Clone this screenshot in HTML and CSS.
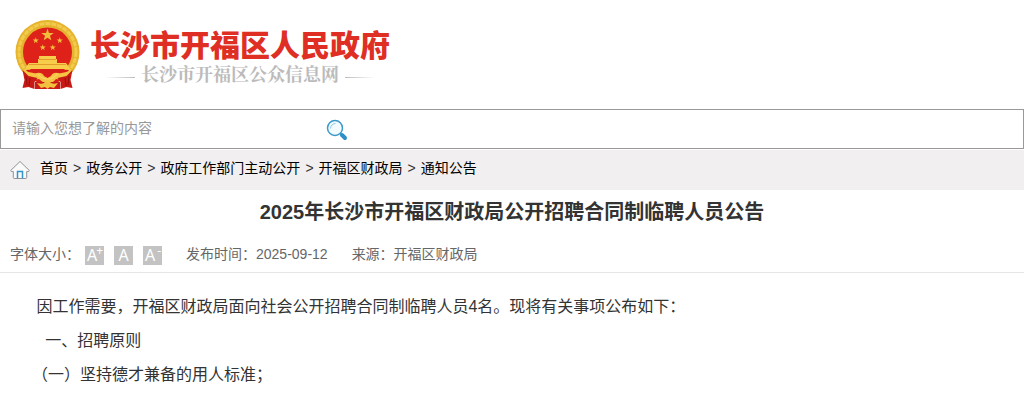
FILE: index.html
```html
<!DOCTYPE html>
<html lang="zh-CN">
<head>
  <meta charset="UTF-8">
  <meta name="viewport" content="width=device-width, initial-scale=1.0">
  <title>2025年长沙市开福区财政局公开招聘合同制临聘人员公告</title>
  <link rel="stylesheet" href="styles.css">
</head>
<body>

  <!-- Logo -->
  <header class="header">
    <svg class="emblem" width="66" height="70" viewBox="0 0 66 70" aria-hidden="true">
      <circle cx="32.500" cy="32" r="32" fill="#e6b32f"/>
      <circle cx="32.500" cy="32" r="28.500" fill="none" stroke="#f3cb4c" stroke-width="3" stroke-dasharray="5 1"/>
      <circle cx="32.500" cy="32" r="24.500" fill="#de2119"/>
      <g fill="#f3bd3c">
        <path id="star" d="M32.500 8.500l1.500 4.400 4.700.1-3.700 2.800 1.300 4.500-3.800-2.600-3.800 2.600 1.300-4.500-3.700-2.800 4.700-.1z"/>
        <use href="#star" transform="translate(4.500 13) scale(.5)"/>
        <use href="#star" transform="translate(28.500 13) scale(.5)"/>
        <use href="#star" transform="translate(11.500 20) scale(.5)"/>
        <use href="#star" transform="translate(21.500 20) scale(.5)"/>
      </g>
      <path d="M24 36h17v3h1v4h9l3 4v2H11v-2l3-4h9v-4h1z" fill="#f9cd4c"/>
      <path d="M24 39.500h17M14 44.500h37" stroke="#e39d2c" fill="none"/>
      <path d="M11 50h43l-5 8-9 6H25l-9-6z" fill="#d91f19"/>
      <path d="M9 50q7 4 13 3 5-1 7 3l3.500 2 3.500-2q2-4 7-3 6 1 13-3l-3 7q-6 3-12 2-4 5-8.500 4.500T24 59q-6 1-12-2z" fill="#f6c443"/>
      <path d="M23 54q3 5 9.500 5t9.500-5" fill="none" stroke="#fbdc6d"/>
      <path d="M7.500 50l6 6 9 2-3 4v7l-6-2-6 1 2-8zM57.500 50l-6 6-9 2 3 4v7l6-2 6 1-2-8z" fill="#c91915"/>
      <path d="M11 56l1 9M15 58l-1 8M54 56l-1 9M50 58l1 8" stroke="#96100f" fill="none"/>
      <path d="M20 62h25v7H20z" fill="#c81a16"/>
      <path d="M22 63q6 2 8-1h5q2 3 8 1l-4 5-4-1-2.500 2-2.500-2-4 1z" fill="#f2bf3e"/>
    </svg>
    <div class="logo-text">
      <h1 class="site-name">长沙市开福区人民政府</h1>
      <div class="sub-name">长沙市开福区公众信息网</div>
    </div>
  </header>

  <!-- Search -->
  <form class="search">
    <input class="search-input" type="text" placeholder="请输入您想了解的内容" aria-label="请输入您想了解的内容">
    <button class="search-btn" type="button" aria-label="搜索">
      <svg width="22" height="22" viewBox="0 0 22 22" aria-hidden="true">
        <circle cx="9" cy="9" r="7.500" fill="#f4fbff" stroke="#3b98c9" stroke-width="1.500"/>
        <path d="M4.500 9.500a5 5 0 0 1 5-5" fill="none" stroke="#8cc5e2"/>
        <path d="M14.500 14.500l2 2" stroke="#3b98c9" stroke-width="2"/>
        <path d="M16 16l3 3" stroke="#2f8fc4" stroke-width="4" stroke-linecap="round"/>
      </svg>
    </button>
  </form>

  <!-- Breadcrumb -->
  <nav class="crumb">
    <svg class="home" width="20" height="20" viewBox="0 0 20 20" fill="none" aria-hidden="true">
      <path d="M10 1.500L.7 10.500q0 1.500 2.600 1V17.500q0 1 1 1h11.400q1 0 1-1v-6q2.600.5 2.600-1z" fill="#fafafa" stroke="#8b9298"/>
      <path d="M7.500 18v-6.500h5V18" stroke="#3294cb" stroke-width="1.500"/>
    </svg>
    <a href="#">首页</a>
    <span>&gt;</span>
    <a href="#">政务公开</a>
    <span>&gt;</span>
    <a href="#">政府工作部门主动公开</a>
    <span>&gt;</span>
    <a href="#">开福区财政局</a>
    <span>&gt;</span>
    <a href="#">通知公告</a>
  </nav>

  <!-- Article -->
  <main>
    <h2 class="title">2025年长沙市开福区财政局公开招聘合同制临聘人员公告</h2>
    <div class="meta">
      <div class="font-size">
        <span>字体大小：</span>
        <button type="button" class="size-btn">A<sup>+</sup></button>
        <button type="button" class="size-btn">A</button>
        <button type="button" class="size-btn">A<sup>-</sup></button>
      </div>
      <span>发布时间：2025-09-12</span>
      <span>来源：开福区财政局</span>
    </div>
    <div class="content">
      <p>&nbsp;因工作需要，开福区财政局面向社会公开招聘合同制临聘人员4名。现将有关事项公布如下：</p>
      <p>&nbsp;&nbsp;&nbsp;一、招聘原则</p>
      <p>（一）坚持德才兼备的用人标准；</p>
    </div>
  </main>

</body>
</html>
```
FILE: styles.css
```css
* {
  box-sizing: border-box;
}

body {
  margin: 0;
  background: #fff;
  color: #333;
  font-family: "Liberation Sans", "Noto Sans CJK SC", sans-serif;
  font-size: 14px;
}

a {
  color: #000;
  text-decoration: none;
}

.header {
  display: flex;
  align-items: flex-start;
  gap: 9px;
  padding: 20px 15px 19px;
}

.logo-text {
  display: flex;
  flex-direction: column;
  padding-top: 9px;
}

.site-name {
  margin: 0;
  color: #df2f25;
  font-size: 30px;
  line-height: 34px;
  font-weight: 900;
}

.sub-name {
  display: flex;
  align-items: center;
  justify-content: center;
  gap: 6px;
  color: #bbb;
  font-family: "Liberation Serif", "Noto Serif CJK SC", "Noto Sans CJK SC", serif;
  font-size: 18px;
  line-height: 24px;
  font-weight: bold;
}

.sub-name::before,
.sub-name::after {
  content: "";
  width: 30px;
  height: 1px;
  margin-top: 4px;
  background: linear-gradient(to right, #fff, #bbb);
}

.sub-name::after {
  background: linear-gradient(to left, #fff, #bbb);
}

.search {
  display: flex;
  align-items: center;
  height: 40px;
  margin-bottom: 1px;
  border: 1px solid #999;
}

.search-input {
  width: 315px;
  height: 36px;
  padding: 0 11px 2px;
  border: none;
  outline: none;
  background: transparent;
  font-family: inherit;
  font-size: 14px;
}

.search-input::placeholder {
  color: #999;
}

.search-btn {
  display: flex;
  padding: 2px 10px 0;
  border: none;
  background: none;
  cursor: pointer;
}

.crumb {
  display: flex;
  align-items: center;
  gap: 5px;
  height: 40px;
  padding: 0 10px 4px;
  background: #f1eff0;
  line-height: 20px;
}

.home {
  margin: 4px 5px 0 0;
}

.title {
  margin: 0;
  padding: 6px 10px 0;
  font-size: 20px;
  line-height: 32px;
  text-align: center;
}

.meta {
  display: flex;
  align-items: center;
  gap: 24px;
  height: 45px;
  padding: 6px 10px 0;
  border-bottom: 1px solid #e6e6e6;
  color: #666;
}

.font-size {
  display: flex;
  align-items: center;
  gap: 10px;
}

.font-size span {
  margin-right: -5px;
}

.size-btn {
  position: relative;
  width: 19px;
  height: 19px;
  margin-top: 4px;
  padding: 0;
  border: none;
  background: #c3c3c3;
  color: #fff;
  font-family: "Noto Sans", sans-serif;
  font-size: 16px;
  line-height: 19px;
  cursor: pointer;
}

.size-btn:has(sup) {
  padding-right: 5px;
}

.size-btn sup {
  position: absolute;
  top: -1px;
  right: 1px;
  font-size: 12px;
  line-height: 12px;
}

.content {
  padding: 17px 10px 0 32px;
  font-size: 16px;
  line-height: 34px;
}

.content p {
  margin: 0;
}
```
